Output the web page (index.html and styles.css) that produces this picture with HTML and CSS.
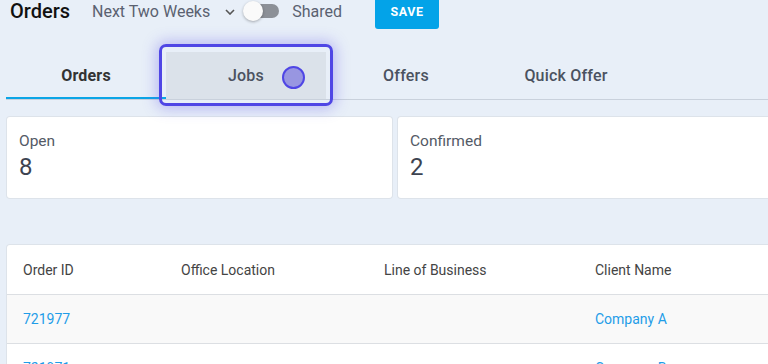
FILE: index.html
```html
<!DOCTYPE html>
<html>
<head>
<meta charset="utf-8">
<link rel="stylesheet" href="styles.css">
</head>
<body>
<div class="page">
  <header class="topbar">
    <h1 class="title">Orders</h1>
    <div class="range">Next Two Weeks
      <svg class="chev" width="10" height="6" viewBox="0 0 10 6"><path d="M1 1l4 4 4-4" fill="none" stroke="#555" stroke-width="1.6"/></svg>
    </div>
    <div class="switch"><span class="track"></span><span class="knob"></span></div>
    <span class="shared">Shared</span>
    <button class="save">SAVE</button>
  </header>

  <nav class="tabs">
    <div class="tab active">Orders</div>
    <div class="tab hover">Jobs</div>
    <div class="tab">Offers</div>
    <div class="tab">Quick Offer</div>
    <div class="focus-ring"></div>
    <div class="cursor-dot"></div>
  </nav>

  <section class="cards">
    <div class="card"><div class="card-label">Open</div><div class="card-value">8</div></div>
    <div class="card wide"><div class="card-label">Confirmed</div><div class="card-value">2</div></div>
  </section>

  <section class="table">
    <div class="row head">
      <div>Order ID</div><div>Office Location</div><div>Line of Business</div><div>Client Name</div>
    </div>
    <div class="row alt">
      <div class="link">721977</div><div></div><div></div><div class="link">Company A</div>
    </div>
    <div class="row">
      <div class="link">721971</div><div></div><div></div><div class="link">Company B</div>
    </div>
  </section>
</div>
</body>
</html>
```

FILE: styles.css
```css
* { box-sizing: border-box; }
html, body { margin: 0; padding: 0; }
body {
  background: #e8eff8;
  font-family: Roboto, "Liberation Sans", Arial, sans-serif;
  color: #333;
  overflow: hidden;
  width: 768px;
  height: 364px;
}
.page { margin-top: -7px; width: 800px; }

.topbar {
  display: flex;
  align-items: center;
  height: 36px;
  padding-left: 10px;
}
.title {
  margin: 0;
  font-size: 20px;
  font-weight: 500;
  color: #111;
  width: 81px;
}
.range {
  display: flex;
  align-items: center;
  font-size: 16px;
  color: #5a6170;
  gap: 15px;
  margin-left: 1px;
}
.chev { margin-top: 1px; }
.switch {
  position: relative;
  width: 38px;
  height: 20px;
  margin-left: 8px;
}
.track {
  position: absolute;
  left: 8px; top: 3px;
  width: 28px; height: 14px;
  border-radius: 7px;
  background: #8c9097;
}
.knob {
  position: absolute;
  left: 0; top: 0;
  width: 20px; height: 20px;
  border-radius: 50%;
  background: #fafafa;
  box-shadow: 0 1px 3px rgba(0,0,0,0.3);
}
.shared {
  font-size: 16px;
  color: #5a6170;
  margin-left: 11px;
}
.save {
  margin-left: 33px;
  width: 64px;
  height: 36px;
  border: 0;
  border-radius: 3px;
  background: #03a3e8;
  color: #fff;
  font-family: Roboto, "Liberation Sans", Arial, sans-serif;
  font-weight: 700;
  font-size: 12.5px;
  letter-spacing: 0.6px;
  padding: 0;
}

.tabs {
  position: relative;
  display: flex;
  margin: 23px 0 0 6px;
  height: 48px;
  border-bottom: 1px solid #c9d1dc;
  width: 794px;
}
.tab {
  width: 160px;
  display: flex;
  align-items: center;
  justify-content: center;
  font-size: 16px;
  font-weight: 500;
  color: #4b5260;
  letter-spacing: 0.2px;
}
.tab.active {
  font-weight: 700;
  color: #333;
  box-shadow: inset 0 -2px 0 #0ba5e6;
}
.tab.hover { background: #dbe2ea; }
.focus-ring {
  position: absolute;
  left: 153px; top: -8px;
  width: 174px; height: 62px;
  border: 3px solid #4f46e5;
  border-radius: 7px;
  box-shadow: 0 0 14px 3px rgba(99, 90, 235, 0.35);
}
.cursor-dot {
  position: absolute;
  left: 276px; top: 14px;
  width: 23px; height: 23px;
  border-radius: 50%;
  background: #9896e1;
  border: 2.5px solid #4f46e5;
}

.cards {
  display: flex;
  gap: 6px;
  margin: 17px 0 0 7px;
}
.card {
  width: 385px;
  height: 81px;
  background: #fff;
  border-radius: 3px;
  box-shadow: 0 0 0 1px #dde3ea;
  padding: 15px 12px;
}
.card.wide { width: 400px; }
.card-label { font-size: 15.5px; color: #545a66; }
.card-value { font-size: 24px; color: #3d4350; margin-top: 3px; }

.table {
  margin: 47px 0 0 7px;
  background: #fff;
  border-radius: 3px;
  box-shadow: 0 0 0 1px #dde3ea;
  width: 800px;
}
.row {
  display: grid;
  grid-template-columns: 158px 203px 211px 1fr;
  padding-left: 16px;
  height: 49px;
  align-items: center;
  font-size: 14px;
  color: #444;
  border-top: 1px solid #dcdfe3;
}
.row.head { border-top: 0; height: 49px; color: #444; }
.row.alt { background: #f9f9f9; }
.link { color: #1f9de8; }
```
